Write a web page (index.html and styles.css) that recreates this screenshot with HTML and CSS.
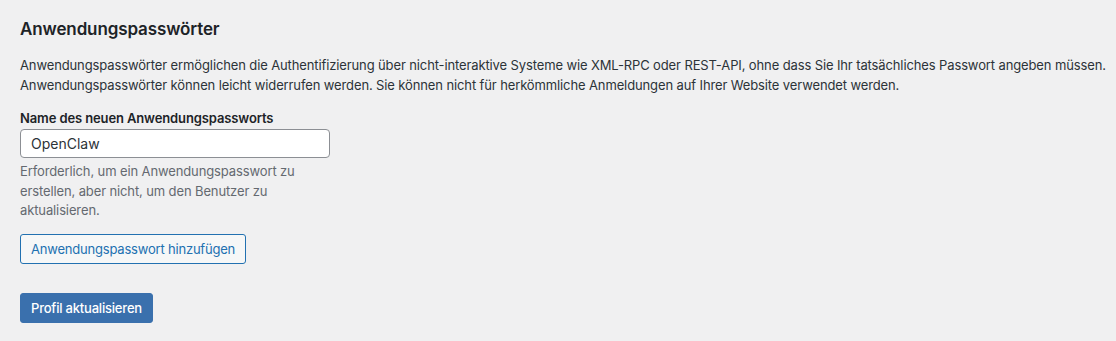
FILE: index.html
```html
<!DOCTYPE html>
<html lang="de">
<head>
  <meta charset="UTF-8">
  <meta name="viewport" content="width=device-width,initial-scale=1">
  <title>Anwendungspasswörter</title>
  <link rel="stylesheet" href="styles.css">
</head>
<body>

  <div class="wrap">
    <h2>Anwendungspasswörter</h2>
    <p class="intro">
      Anwendungspasswörter ermöglichen die Authentifizierung über nicht-interaktive Systeme wie XML-RPC oder REST-API, ohne dass Sie Ihr tatsächliches Passwort angeben müssen.<br>
      Anwendungspasswörter können leicht widerrufen werden. Sie können nicht für herkömmliche Anmeldungen auf Ihrer Website verwendet werden.
    </p>

    <div class="create-pw">
      <label for="new_application_password_name">Name des neuen Anwendungspassworts</label>
      <input type="text" id="new_application_password_name" name="new_application_password_name" value="OpenClaw">
      <p class="description">Erforderlich, um ein Anwendungspasswort zu erstellen, aber nicht, um den Benutzer zu aktualisieren.</p>
      <button type="button" class="button">Anwendungspasswort hinzufügen</button>
    </div>

    <p class="submit">
      <button type="submit" class="button button-primary">Profil aktualisieren</button>
    </p>
  </div>

</body>
</html>
```

FILE: styles.css
```css
body { margin:0; background:#f0f0f1; color:#1d2327; font-family:Inter, "Noto Sans", sans-serif; font-size:13px; line-height:1.4; letter-spacing:-0.12px; }
.wrap { padding:18px 20px 20px; }
h2 { font-size:17px; font-weight:600; margin:0 0 15px; line-height:1.3; }
.intro { margin:0 0 14px; line-height:20px; color:#2c3338; white-space:nowrap; }
.create-pw { display:flex; flex-direction:column; align-items:flex-start; }
label { font-weight:600; margin-bottom:2px; }
input { width:310px; height:29px; box-sizing:border-box; padding:0 10px; border:1px solid #8c8f94; border-radius:4px; font:inherit; font-size:14px; color:#2c3338; background:#fff; }
.description { width:280px; margin:4px 0 0; color:#646970; line-height:19.5px; }
.button { font:inherit; font-size:13px; letter-spacing:-0.2px; height:30px; padding:0 10px; border:1px solid #2271b1; border-radius:3px; background:#f6f7f7; color:#2271b1; cursor:pointer; margin-top:13px; }
.submit { margin:29px 0 0; }
.button-primary { margin:0; background:#3a70ad; border-color:#3a70ad; color:#fff; font-weight:500; }
```
